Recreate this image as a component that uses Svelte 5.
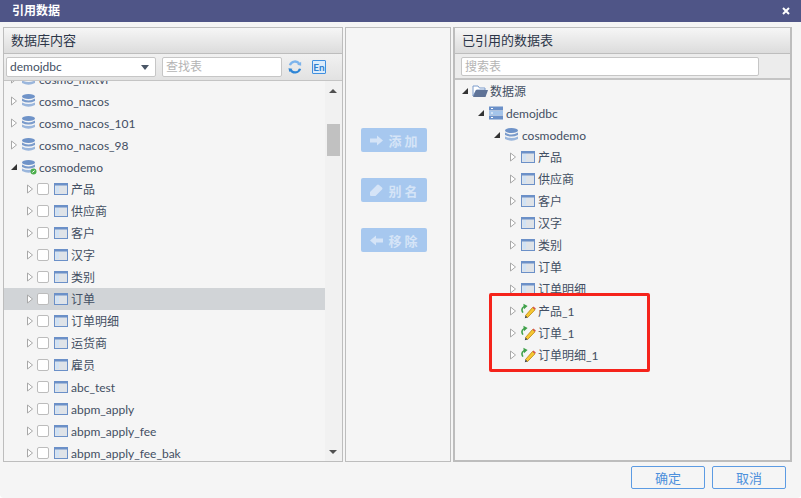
<script>
  const leftRows = [
    { name: 'cosmo_mxtvi', kind: 'db' },
    { name: 'cosmo_nacos', kind: 'db' },
    { name: 'cosmo_nacos_101', kind: 'db' },
    { name: 'cosmo_nacos_98', kind: 'db' },
    { name: 'cosmodemo', kind: 'dbok', open: true },
    ...['产品', '供应商', '客户', '汉字', '类别', '订单', '订单明细', '运货商', '雇员', 'abc_test', 'abpm_apply', 'abpm_apply_fee', 'abpm_apply_fee_bak'].map((name) => ({
      name,
      kind: 'table',
      check: true,
      selected: name === '订单'
    }))
  ];
  const rightRows = [
    { name: '数据源', kind: 'folder', open: true, depth: 0 },
    { name: 'demojdbc', kind: 'server', open: true, depth: 1 },
    { name: 'cosmodemo', kind: 'db', open: true, depth: 2 },
    ...['产品', '供应商', '客户', '汉字', '类别', '订单', '订单明细'].map((name) => ({ name, kind: 'table', depth: 3 })),
    ...['产品_1', '订单_1', '订单明细_1'].map((name) => ({ name, kind: 'alias', depth: 3 }))
  ];
  const isCjk = (s) => /[\u4e00-\u9fff]/.test(s);
</script>

{#snippet arrow(open)}
  <svg class="arrow" width="8" height="10" viewBox="0 0 8 10">
    {#if open}
      <path d="M1 8 L7 8 L7 2 Z" fill="#333" />
    {:else}
      <path d="M1.5 1 L6.5 5 L1.5 9 Z" fill="#fff" stroke="#a8a8a8" />
    {/if}
  </svg>
{/snippet}

{#snippet icon(kind)}
  <svg class="icon" width="16" height="16" viewBox="0 0 16 16">
    {#if kind === 'db' || kind === 'dbok'}
      <ellipse cx="7.5" cy="3.5" rx="6.5" ry="2.6" fill="#6f93c8" />
      <path d="M1 5.6 Q7.5 9.4 14 5.6 V8 Q7.5 11.2 1 8 Z" fill="#7a9bcb" />
      <path d="M1 9.4 Q7.5 12.8 14 9.4 V12 Q7.5 15.4 1 12 Z" fill="#9ab6dc" />
      {#if kind === 'dbok'}
        <circle cx="12.5" cy="12.5" r="3" fill="#4cae4c" />
        <path d="M11.3 13.5 L13.7 11.5" stroke="#fff" stroke-width="1" />
      {/if}
    {:else if kind === 'table'}
      <rect x="1.5" y="2.5" width="13" height="11" fill="#dfe3e8" stroke="#6b90c8" />
      <rect x="1" y="2" width="14" height="2.5" fill="#6b90c8" />
      <rect x="3" y="5" width="3" height="7" fill="#d0e2f5" />
    {:else if kind === 'folder'}
      <path d="M1 13 V3 H6 L7.5 5 H13 V7 H4.5 Z" fill="#fff" stroke="#7a9bcb" />
      <path d="M1 14 L4 7 H16 L13.5 14 Z" fill="#5f7397" />
    {:else if kind === 'server'}
      <rect x="1" y="1.5" width="14" height="4" fill="#6b90c8" />
      <rect x="1" y="6" width="14" height="4" fill="#a4c4ea" />
      <rect x="1" y="10.5" width="14" height="4" fill="#6b90c8" />
      <path d="M3 3.5 H5 M3 8 H5 M3 12.5 H5" stroke="#fff" />
    {:else if kind === 'alias'}
      <path d="M5.5 12.5 L12.5 4.5 L15 6.8 L7.5 14.6 Z" fill="#f7c733" stroke="#b8860b" stroke-width=".8" />
      <path d="M12.5 4.5 L13.5 3.4 L15.8 5.6 L15 6.8 Z" fill="#d9534f" />
      <path d="M5.5 12.5 L4.8 15.2 L7.5 14.6 Z" fill="#444" />
      <path d="M2.2 10 Q-0.5 5.5 3.6 3 L3.4 0.8 L7.6 3 L4 6.2 L3.8 4.6 Q1.8 7 3.6 9.2 Z" fill="#3fa14a" />
    {/if}
  </svg>
{/snippet}

{#snippet row(r)}
  <div class="row" class:selected={r.selected} style:padding-left={r.depth !== undefined ? `${6 + r.depth * 16}px` : r.check ? '22px' : '6px'}>
    {@render arrow(r.open)}
    {#if r.check}<span class="check"></span>{/if}
    {@render icon(r.kind)}
    <span class="label" class:cjk={isCjk(r.name)}>{r.name}</span>
  </div>
{/snippet}

<div class="dialog">
  <header class="title">
    <span>引用数据</span>
    <svg class="close" width="8" height="8" viewBox="0 0 8 8"><path d="M1 1 L7 7 M7 1 L1 7" stroke="#fff" stroke-width="2" /></svg>
  </header>

  <div class="panels">
    <section class="panel left">
      <h2>数据库内容</h2>
      <div class="toolbar">
        <div class="select">demojdbc<i class="caret"></i></div>
        <div class="input find">查找表</div>
        <svg class="refresh" width="14" height="14" viewBox="0 0 16 16">
          <path d="M2.2 6 A6 6 0 0 1 13 4.5" fill="none" stroke="#7db4ec" stroke-width="2.6" />
          <path d="M13.8 10 A6 6 0 0 1 2.8 11" fill="none" stroke="#2f86d6" stroke-width="2.6" />
          <path d="M10.5 5.5 L15 6.5 L15 2 Z" fill="#7db4ec" />
          <path d="M0.5 9.5 L5 10 L1.5 13.8 Z" fill="#2f86d6" />
        </svg>
        <span class="en">En</span>
      </div>
      <div class="tree-wrap">
        <div class="tree scrolled">
          {#each leftRows as r}{@render row(r)}{/each}
        </div>
        <div class="scrollbar">
          <i class="up"></i>
          <i class="thumb"></i>
          <i class="down"></i>
        </div>
      </div>
    </section>

    <section class="panel middle">
      <button><svg width="13" height="11" viewBox="0 0 13 11"><path d="M0 3.5 H7 V0.5 L13 5.5 L7 10.5 V7.5 H0 Z" fill="#d5e4f7" /></svg>添 加</button>
      <button><svg width="13" height="12" viewBox="0 0 13 12"><path d="M0 8 L7 1 Q8 0 9 1 L12 3.5 Q13 4.5 12 5.5 L5.5 12 H1 Q0 12 0 11 Z" fill="#d5e4f7" /></svg>别 名</button>
      <button><svg width="13" height="11" viewBox="0 0 13 11"><path d="M13 3.5 H6 V0.5 L0 5.5 L6 10.5 V7.5 H13 Z" fill="#d5e4f7" /></svg>移 除</button>
    </section>

    <section class="panel right">
      <h2>已引用的数据表</h2>
      <div class="searchbar"><div class="input search">搜索表</div></div>
      <div class="tree">
        {#each rightRows as r}{@render row(r)}{/each}
      </div>
      <div class="mark"></div>
    </section>
  </div>

  <footer>
    <button class="ghost">确定</button>
    <button class="ghost">取消</button>
  </footer>
</div>

<style>
  :global(body) { margin: 0; background: #fff; }
  .dialog {
    width: 801px;
    height: 498px;
    background: #f5f5f5;
    display: flex;
    flex-direction: column;
    font-family: Lato, "Noto Sans CJK SC", sans-serif;
    font-size: 12px;
    color: #434f63;
    overflow: hidden;
    border-radius: 0 0 4px 4px;
  }
  .title {
    height: 22px;
    flex: none;
    background: #4f5587;
    color: #fff;
    font-weight: 700;
    line-height: 24px;
    padding: 0 12px;
    display: flex;
    justify-content: space-between;
    align-items: center;
  }
  .close { margin-right: -1px; }
  .panels {
    height: 435px;
    margin: 5px 9px 0 3px;
    flex: none;
    display: flex;
    gap: 2px;
  }
  .panel {
    position: relative;
    border: 1px solid #bdbdbd;
    box-sizing: border-box;
    display: flex;
    flex-direction: column;
    min-width: 0;
  }
  .left { width: 340px; }
  .middle {
    width: 106px;
    align-items: flex-start;
    padding: 100px 0 0 15px;
    gap: 26px;
  }
  .right { flex: 1; border-width: 1px 2px 2px; }
  h2 {
    margin: 0;
    height: 26px;
    flex: none;
    box-sizing: border-box;
    background: linear-gradient(#f6f6f6, #dcdcdc);
    border-bottom: 1px solid #bdbdbd;
    font-size: 13px;
    font-weight: 400;
    line-height: 24px;
    padding-left: 7px;
    color: #2c3648;
  }
  .toolbar {
    height: 27px;
    flex: none;
    box-sizing: border-box;
    background: linear-gradient(#f1f1f1, #e2e2e2);
    border-bottom: 1px solid #c4c4c4;
    display: flex;
    align-items: center;
    padding: 0 0 0 2px;
  }
  .select, .input {
    height: 20px;
    box-sizing: border-box;
    border: 1px solid #c6c6c6;
    border-radius: 2px;
    background: #fff;
    line-height: 18px;
    padding-left: 3px;
    overflow: hidden;
  }
  .select { width: 150px; position: relative; margin-right: 6px; }
  .caret {
    position: absolute;
    right: 6px;
    top: 7px;
    border: 4px solid transparent;
    border-top: 5px solid #4a5666;
    border-bottom: 0;
  }
  .input { color: #b4b4b4; }
  .find { width: 120px; margin-right: 6px; }
  .refresh { margin-right: 10px; }
  .en {
    width: 12px;
    height: 12px;
    border: 1px solid #3f8fdf;
    border-radius: 1px;
    background: #dcecfb;
    color: #2f7fd0;
    font-size: 10px;
    font-weight: 700;
    line-height: 12px;
    text-align: center;
  }
  .tree-wrap { flex: 1; display: flex; min-height: 0; }
  .tree { flex: 1; overflow: hidden; min-width: 0; }
  .scrolled > :global(:first-child) { margin-top: -13px; }
  .row {
    height: 22px;
    display: flex;
    align-items: center;
    box-sizing: border-box;
    white-space: nowrap;
  }
  .selected { background: #d1d4d7; }
  .arrow { flex: none; margin-right: 3px; }
  .icon { flex: none; margin-right: 2px; }
  .label.cjk { padding-bottom: 2px; }
  .check {
    flex: none;
    width: 10px;
    height: 10px;
    border: 1px solid #bcbcbc;
    border-radius: 2px;
    background: #fff;
    margin-right: 4px;
  }
  .scrollbar {
    width: 17px;
    flex: none;
    position: relative;
    background: #f1f1f1;
  }
  .thumb {
    position: absolute;
    left: 2px;
    top: 43px;
    width: 13px;
    height: 32px;
    background: #c1c1c1;
  }
  .up, .down {
    position: absolute;
    left: 4px;
    border: 4px solid transparent;
  }
  .up { top: 8px; border-bottom: 4px solid #505050; border-top: 0; }
  .down { bottom: 7px; border-top: 4px solid #505050; border-bottom: 0; }
  .middle button {
    width: 66px;
    height: 24px;
    border: 0;
    border-radius: 2px;
    background: #a7c8ef;
    color: #d5e4f7;
    font: 700 13px Lato, "Noto Sans CJK SC", sans-serif;
    display: flex;
    align-items: center;
    justify-content: center;
    gap: 5px;
    padding: 0;
  }
  .searchbar {
    height: 26px;
    flex: none;
    box-sizing: border-box;
    background: #ececec;
    border-bottom: 2px solid #c4c4c4;
    padding: 3px 0 0 6px;
  }
  .search { width: 298px; height: 19px; line-height: 17px; }
  .mark {
    position: absolute;
    left: 34px;
    top: 265px;
    width: 161px;
    height: 79px;
    box-sizing: border-box;
    border: 3px solid #f5231b;
    border-radius: 2px;
  }
  footer {
    flex: 1;
    display: flex;
    justify-content: flex-end;
    gap: 7px;
    padding: 4px 15px 0 0;
  }
  .ghost {
    width: 74px;
    height: 23px;
    background: transparent;
    border: 1px solid #5c9be3;
    border-radius: 2px;
    color: #4d90dc;
    font: 13px Lato, "Noto Sans CJK SC", sans-serif;
    padding: 0;
  }
</style>
